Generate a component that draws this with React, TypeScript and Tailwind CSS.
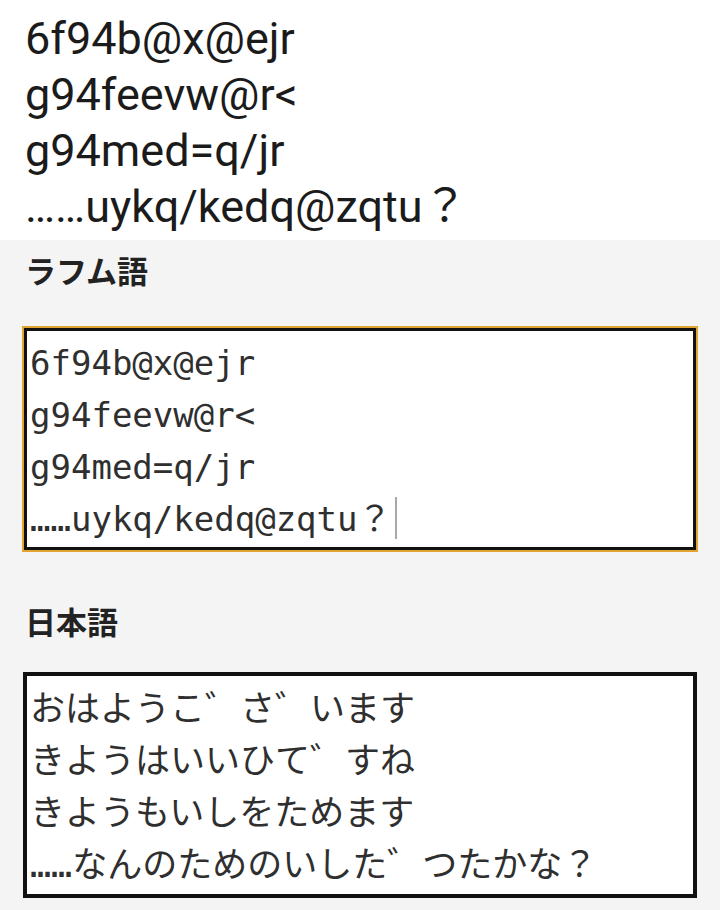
import React from "react";

const topLines = ["6f94b@x@ejr", "g94feevw@r<", "g94med=q/jr", "……uykq/kedq@zqtu？"];
const jpLines = ["おはようこ゛さ゛います", "きようはいいひて゛すね", "きようもいしをためます", "……なんのためのいした゛つたかな？"];

export default function App() {
  return (
    <div className="w-[720px] h-[910px] bg-white flex flex-col overflow-hidden">
      <div
        className="pt-[11px] pb-[5px] pl-[25px] text-[45px] leading-[56px] text-[#1b1b1b]"
        style={{ fontFamily: "Roboto, 'Noto Sans CJK JP', sans-serif" }}
      >
        {topLines.map((l, i) => (
          <div key={i} className="whitespace-pre">{l}</div>
        ))}
      </div>
      <div
        className="flex-1 bg-[#f4f4f4] px-[24px] pt-[10px]"
        style={{ fontFamily: "'Noto Sans CJK JP', sans-serif" }}
      >
        <div className="text-[31px] leading-[40px] font-bold text-[#222] pl-[1px]">ラフム語</div>
        <div
          className="mt-[38px] h-[222px] bg-white border-[3px] border-[#111] outline-2 outline-[#e2a431] pt-[6px] pl-[3px] text-[34px] leading-[52px] text-[#2f2f2f]"
          style={{ fontFamily: "'DejaVu Sans Mono', 'Noto Sans CJK JP', monospace" }}
        >
          {topLines.map((l, i) => (
            <div key={i} className="whitespace-pre">
              {l}
              {i === 3 && (
                <span className="inline-block ml-[3px] w-[2px] h-[42px] bg-[#a8a8a8] align-[-8px]" />
              )}
            </div>
          ))}
        </div>
        <div className="mt-[51px] text-[31px] leading-[40px] font-bold text-[#222] pl-[1px]">日本語</div>
        <div
          className="mt-[31px] -mx-px h-[226px] bg-white border-[4px] border-[#111] pt-[7px] pl-[3px] text-[35px] leading-[52px] text-[#2f2f2f]"
          style={{ fontFamily: "'DejaVu Sans Mono', 'Noto Sans CJK JP', monospace" }}
        >
          {jpLines.map((l, i) => (
            <div key={i} className="whitespace-pre">{l}</div>
          ))}
        </div>
      </div>
    </div>
  );
}
